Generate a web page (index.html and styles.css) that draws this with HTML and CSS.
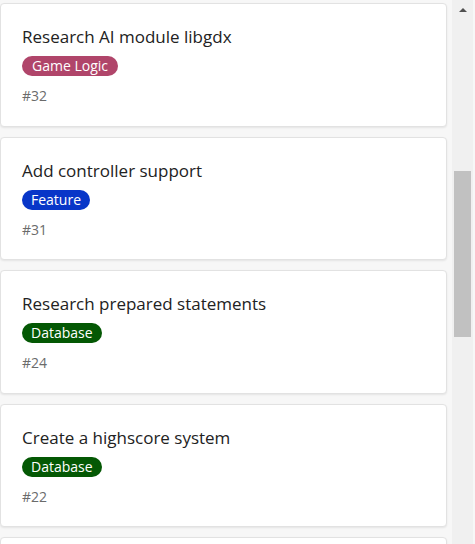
FILE: index.html
```html
<!DOCTYPE html>
<html lang="en">
<head>
<meta charset="utf-8">
<title>Board column</title>
<link rel="stylesheet" href="styles.css">
</head>
<body>
<div class="page">
  <main class="column">
    <article class="card">
      <h3 class="card-title">Research AI module libgdx</h3>
      <div class="labels"><span class="label label-logic">Game Logic</span></div>
      <div class="card-id">#32</div>
    </article>
    <article class="card">
      <h3 class="card-title">Add controller support</h3>
      <div class="labels"><span class="label label-feature">Feature</span></div>
      <div class="card-id">#31</div>
    </article>
    <article class="card">
      <h3 class="card-title">Research prepared statements</h3>
      <div class="labels"><span class="label label-db">Database</span></div>
      <div class="card-id">#24</div>
    </article>
    <article class="card">
      <h3 class="card-title">Create a highscore system</h3>
      <div class="labels"><span class="label label-db">Database</span></div>
      <div class="card-id">#22</div>
    </article>
    <article class="card card-partial"></article>
  </main>
  <div class="scrollbar">
    <div class="scroll-up"></div>
    <div class="scroll-thumb"></div>
  </div>
</div>
</body>
</html>
```
FILE: styles.css
```css
html, body {
  margin: 0;
  padding: 0;
}
body {
  background: #f7f7f7;
  font-family: "Open Sans", "Noto Sans", sans-serif;
  color: #222;
  overflow: hidden;
}
.page {
  display: flex;
  height: 544px;
  overflow: hidden;
}
.column {
  width: 447px;
  flex: none;
  display: flex;
  flex-direction: column;
  gap: 10px;
  padding-top: 3px;
  margin-right: 5px;
}
.card {
  flex: none;
  background: #fff;
  border: 1px solid #e2e2e2;
  border-radius: 4px;
  box-shadow: 0 1px 2px rgba(0,0,0,0.08);
  padding: 21px 21px 19px;
  height: 123.5px;
  box-sizing: border-box;
}
.card-title {
  margin: 0;
  font-size: 17px;
  font-weight: 400;
  line-height: 24px;
  color: #222;
}
.labels {
  margin-top: 7px;
  display: flex;
}
.label {
  display: inline-block;
  height: 20px;
  line-height: 20px;
  padding: 0 9px;
  border-radius: 10px;
  color: #fff;
  font-size: 14px;
}
.label-logic { background: #b0456a; padding: 0 10px; }
.label-feature { background: #0836c8; }
.label-db { background: #045804; }
.card-id {
  margin-top: 10px;
  font-size: 14px;
  line-height: 20px;
  color: #6b6b6b;
}
.scrollbar {
  width: 21px;
  flex: none;
  background: #f0f0f0;
  display: flex;
  flex-direction: column;
  align-items: center;
}
.scroll-up {
  margin-top: 8px;
  width: 0;
  height: 0;
  border-left: 4px solid transparent;
  border-right: 4px solid transparent;
  border-bottom: 4px solid #505050;
}
.scroll-thumb {
  margin-top: 159px;
  width: 17px;
  height: 166px;
  background: #c1c1c1;
}
```
